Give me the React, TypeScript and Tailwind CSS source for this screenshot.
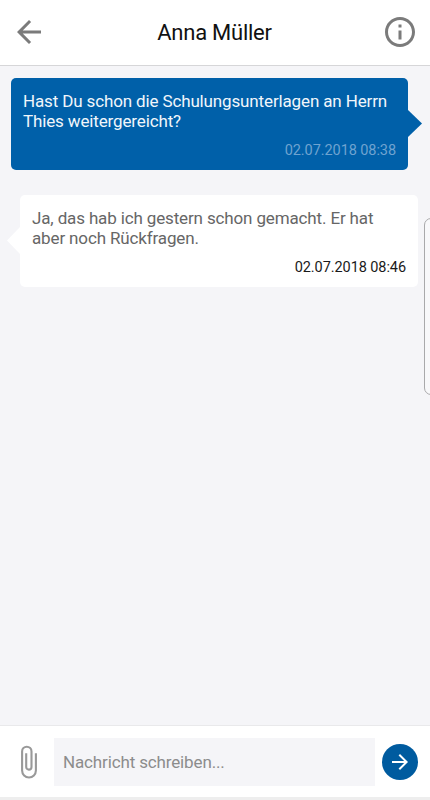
import { clsx } from 'clsx'
import {
  MdArrowBack,
  MdArrowForward,
  MdInfoOutline,
} from 'react-icons/md'

interface Message {
  id: number
  text: string
  date: string
  own: boolean
}

const messages: Message[] = [
  {
    id: 1,
    text: 'Hast Du schon die Schulungsunterlagen an Herrn Thies weitergereicht?',
    date: '02.07.2018 08:38',
    own: true,
  },
  {
    id: 2,
    text: 'Ja, das hab ich gestern schon gemacht. Er hat aber noch Rückfragen.',
    date: '02.07.2018 08:46',
    own: false,
  },
]

export default function App() {
  return (
    <div className="relative flex h-screen w-full flex-col overflow-hidden bg-[#f5f5f8] font-['Roboto',sans-serif]">
      <Header name="Anna Müller" />
      <main className="flex flex-1 flex-col gap-[25px] pt-3">
        {messages.map(message => (
          <Bubble key={message.id} message={message} />
        ))}
      </main>
      <Composer />
      {/* edge panel handle */}
      <div className="absolute top-[218px] -right-2 h-[177px] w-[14px] rounded-lg border border-[#a9a9ab] bg-[#f8f8fa]" />
    </div>
  )
}

function Header({ name }: { name: string }) {
  return (
    <header className="flex h-[66px] shrink-0 items-center justify-between border-b border-[#d6d6d8] bg-white pr-3 pb-px pl-[11px] text-[#7b7b7b]">
      <button type="button" aria-label="Zurück">
        <MdArrowBack className="size-9" />
      </button>
      <h1 className="pt-0.5 text-[22px] leading-none tracking-[-0.25px] text-[#111]">
        {name}
      </h1>
      <button type="button" aria-label="Info">
        <MdInfoOutline className="size-9" />
      </button>
    </header>
  )
}

function Bubble({ message }: { message: Message }) {
  return (
    <div
      className={clsx(
        'relative flex h-[92px] flex-col justify-between rounded-[5px] px-3 pt-[14px] pb-[11px]',
        message.own
          ? 'mr-[22px] ml-[11px] bg-[#0060a9] text-[#f1f6fb]'
          : 'mr-3 ml-5 bg-white text-[#666]',
      )}
    >
      <p className="text-[17px] leading-[19.5px] tracking-[-0.14px]">
        {message.text}
      </p>
      <time
        className={clsx(
          'self-end pt-px text-[14.5px] leading-[17px] tracking-[-0.08px]',
          message.own ? 'text-[#6fa3d0]' : 'text-[#1a1a1a]',
        )}
      >
        {message.date}
      </time>
      <svg
        viewBox="0 0 14 27"
        preserveAspectRatio="none"
        className={clsx(
          'absolute h-[27px]',
          message.own
            ? 'top-[31.5px] left-full w-[14px] fill-[#0060a9]'
            : 'top-[31.5px] right-full w-[13px] -scale-x-100 fill-white',
        )}
      >
        <path d="M0 0L14 13.5L0 27Z" />
      </svg>
    </div>
  )
}

function Composer() {
  return (
    <footer className="flex h-[75px] shrink-0 items-center border-t border-b-[3px] border-t-[#e9e9eb] border-b-[#eeeeee] bg-white pr-3 pl-[11px]">
      <button type="button" aria-label="Anhang">
        <PaperclipIcon />
      </button>
      <input
        type="text"
        placeholder="Nachricht schreiben..."
        className="ml-[7px] h-12 min-w-0 flex-1 bg-[#f5f5f8] px-[9px] text-[17px] tracking-[-0.14px] outline-none placeholder:text-[#8c8c8c]"
      />
      <button
        type="button"
        aria-label="Senden"
        className="ml-[7px] flex size-9 items-center justify-center rounded-full bg-[#005b9f] text-white"
      >
        <MdArrowForward className="size-6" />
      </button>
    </footer>
  )
}

function PaperclipIcon() {
  return (
    <svg
      viewBox="0 0 36 36"
      fill="none"
      strokeWidth="2.1"
      className="size-9 stroke-[#999]"
    >
      <path d="M24.9 9.2V26.6a6.9 6.9 0 0 1-13.8 0V7.4a4.7 4.7 0 0 1 9.4 0V23a2.65 2.65 0 0 1-5.3 0V9.2" />
    </svg>
  )
}
